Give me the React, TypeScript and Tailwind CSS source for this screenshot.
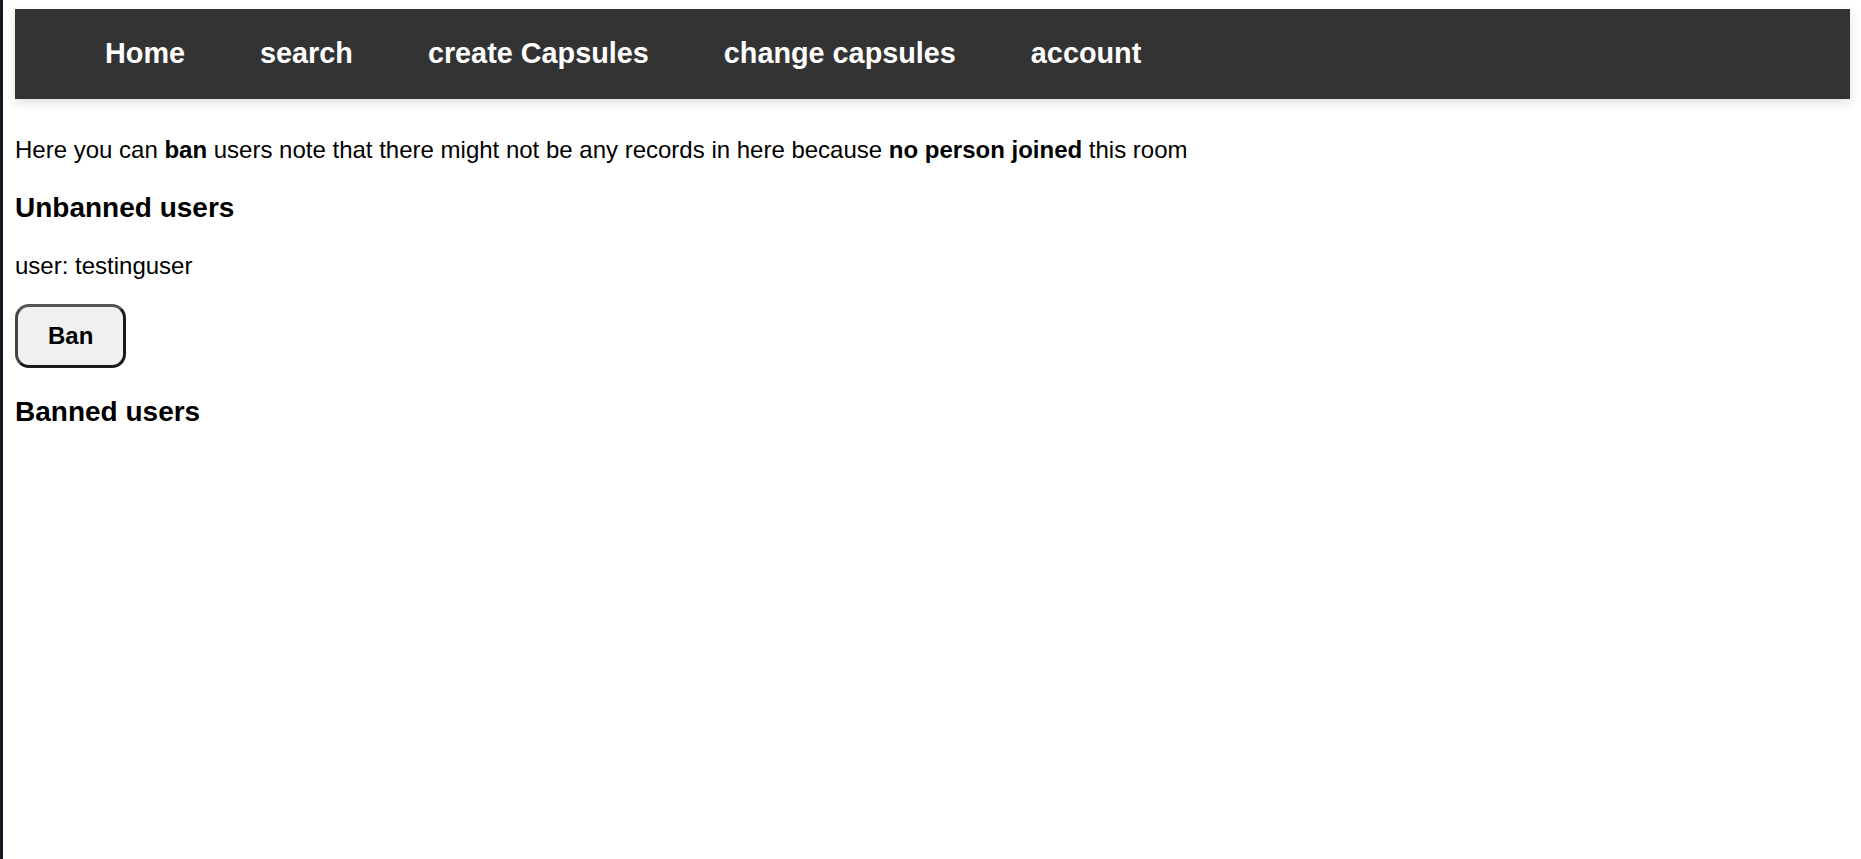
export default function App() {
  const links = ['Home', 'search', 'create Capsules', 'change capsules', 'account']

  return (
    <div className="min-h-screen bg-white border-l-[3px] border-[#141a22] font-['Liberation_Sans',Arial,sans-serif] text-black">
      <div className="pl-3 pr-[11px] pt-[9px]">
        <nav className="h-[90px] bg-[#333333] flex items-center gap-[75px] pl-[90px] shadow-[0_4px_10px_rgba(0,0,0,0.12)]">
          {links.map((l) => (
            <a key={l} className="text-white font-bold text-[28.8px] leading-[1.15] cursor-pointer">
              {l}
            </a>
          ))}
        </nav>

        <p className="mt-[37px] text-[24px] leading-[1.15]">
          Here you can <b>ban</b> users note that there might not be any records in here because{' '}
          <b>no person joined</b> this room
        </p>

        <h3 className="mt-[28px] text-[28px] font-bold leading-[1.15]">Unbanned users</h3>

        <p className="mt-[28px] text-[24px] leading-[1.15]">user: testinguser</p>

        {/* ban button */}
        <button className="mt-[25px] px-[30px] py-[15px] border-[3px] border-t-[#555555] border-l-[#444444] border-r-[#1a1a1a] border-b-[#1a1a1a] rounded-[14px] bg-[#f0f0f0] text-[24px] font-bold leading-[1.15]">
          Ban
        </button>

        <h3 className="mt-[28px] text-[28px] font-bold leading-[1.15]">Banned users</h3>
      </div>
    </div>
  )
}
